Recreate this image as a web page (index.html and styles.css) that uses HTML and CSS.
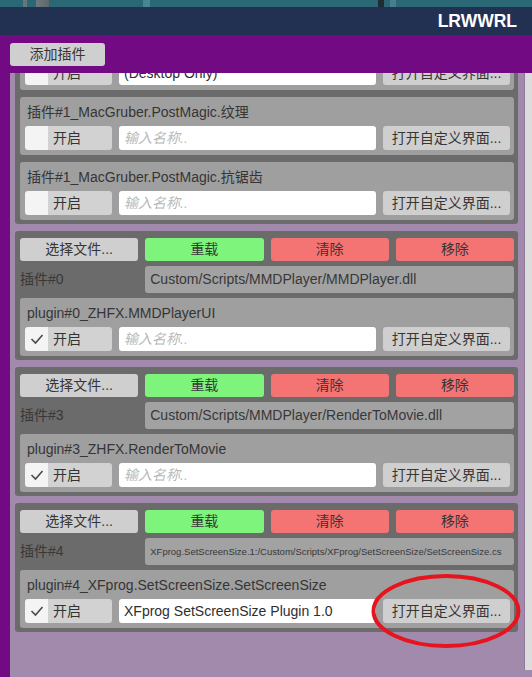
FILE: index.html
```html
<!DOCTYPE html>
<html lang="zh">
<head>
<meta charset="utf-8">
<title>LRWWRL</title>
<link rel="stylesheet" href="styles.css">
</head>
<body>
<div class="scene"></div>
<header class="titlebar"><span class="brand">LRWWRL</span></header>
<div class="toolbar"><button class="btn add-btn">添加插件</button></div>
<div class="body-area">
  <div class="edge"></div>
  <div class="viewport">
    <div class="content">
      <section class="panel panel-stack">
        <div class="card">
          <div class="card-title">插件#1_MacGruber.PostMagic.Desktop</div>
          <div class="controls">
            <div class="toggle"><span class="check"></span><span class="toggle-label">开启</span></div>
            <div class="input filled">(Desktop Only)</div>
            <button class="btn open-btn">打开自定义界面...</button>
          </div>
        </div>
        <div class="card">
          <div class="card-title">插件#1_MacGruber.PostMagic.纹理</div>
          <div class="controls">
            <div class="toggle"><span class="check"></span><span class="toggle-label">开启</span></div>
            <div class="input placeholder">输入名称..</div>
            <button class="btn open-btn">打开自定义界面...</button>
          </div>
        </div>
        <div class="card">
          <div class="card-title">插件#1_MacGruber.PostMagic.抗锯齿</div>
          <div class="controls">
            <div class="toggle"><span class="check"></span><span class="toggle-label">开启</span></div>
            <div class="input placeholder">输入名称..</div>
            <button class="btn open-btn">打开自定义界面...</button>
          </div>
        </div>
      </section>

      <section class="panel panel-grid">
        <button class="btn">选择文件...</button>
        <button class="btn btn-green">重载</button>
        <button class="btn btn-red">清除</button>
        <button class="btn btn-red">移除</button>
        <div class="plugin-label">插件#0</div>
        <div class="path-field">Custom/Scripts/MMDPlayer/MMDPlayer.dll</div>
        <div class="card card-wide">
          <div class="card-title">plugin#0_ZHFX.MMDPlayerUI</div>
          <div class="controls">
            <div class="toggle"><span class="check"><svg class="tick" viewBox="0 0 14 12" width="14" height="12"><polyline points="1.5,6 5.5,10 12.5,2"/></svg></span><span class="toggle-label">开启</span></div>
            <div class="input placeholder">输入名称..</div>
            <button class="btn open-btn">打开自定义界面...</button>
          </div>
        </div>
      </section>

      <section class="panel panel-grid">
        <button class="btn">选择文件...</button>
        <button class="btn btn-green">重载</button>
        <button class="btn btn-red">清除</button>
        <button class="btn btn-red">移除</button>
        <div class="plugin-label">插件#3</div>
        <div class="path-field">Custom/Scripts/MMDPlayer/RenderToMovie.dll</div>
        <div class="card card-wide">
          <div class="card-title">plugin#3_ZHFX.RenderToMovie</div>
          <div class="controls">
            <div class="toggle"><span class="check"><svg class="tick" viewBox="0 0 14 12" width="14" height="12"><polyline points="1.5,6 5.5,10 12.5,2"/></svg></span><span class="toggle-label">开启</span></div>
            <div class="input placeholder">输入名称..</div>
            <button class="btn open-btn">打开自定义界面...</button>
          </div>
        </div>
      </section>

      <section class="panel panel-grid">
        <button class="btn">选择文件...</button>
        <button class="btn btn-green">重载</button>
        <button class="btn btn-red">清除</button>
        <button class="btn btn-red">移除</button>
        <div class="plugin-label">插件#4</div>
        <div class="path-field small">XFprog.SetScreenSize.1:/Custom/Scripts/XFprog/SetScreenSize/SetScreenSize.cs</div>
        <div class="card card-wide">
          <div class="card-title">plugin#4_XFprog.SetScreenSize.SetScreenSize</div>
          <div class="controls">
            <div class="toggle"><span class="check"><svg class="tick" viewBox="0 0 14 12" width="14" height="12"><polyline points="1.5,6 5.5,10 12.5,2"/></svg></span><span class="toggle-label">开启</span></div>
            <div class="input filled">XFprog SetScreenSize Plugin 1.0</div>
            <button class="btn open-btn">打开自定义界面...</button>
          </div>
        </div>
      </section>
    </div>
  </div>
  <div class="scrollbar"></div>
</div>
<svg class="annotation" width="160" height="84" viewBox="0 0 160 84">
  <ellipse cx="80" cy="42" rx="72.5" ry="35" />
</svg>
</body>
</html>
```

FILE: styles.css
```css
html, body {
  margin: 0;
  padding: 0;
}

body {
  width: 532px;
  height: 677px;
  overflow: hidden;
  display: flex;
  flex-direction: column;
  font-family: "Liberation Sans", Arial, "Noto Sans CJK SC", sans-serif;
  font-size: 14px;
  color: #343434;
  background: #a18aab;
  position: relative;
}

.scene {
  height: 7px;
  flex: none;
  background:
    linear-gradient(90deg,
      #2b6876 0, #2b6876 23px,
      #6b7479 23px, #6b7479 27px,
      #2b6876 27px, #2b6876 36px,
      #6f787c 36px, #5d676b 49px,
      #2b6876 49px, #2b6876 143px,
      #4a8591 143px, #4a8591 150px,
      #2b6876 150px, #2b6876 378px,
      #1f2c33 378px, #1f2c33 384px,
      #2b6876 384px, #2b6876 390px,
      #467f8b 390px, #467f8b 396px,
      #2b6876 396px);
}

.titlebar {
  height: 28px;
  flex: none;
  background: #223152;
  display: flex;
  align-items: center;
  justify-content: flex-end;
  padding-right: 15px;
}

.brand {
  color: #ffffff;
  font-weight: bold;
  font-size: 17.5px;
  letter-spacing: 0;
}

.toolbar {
  height: 38px;
  flex: none;
  background: #720a84;
  padding: 8px 10px 0;
  box-sizing: border-box;
  position: relative;
  z-index: 2;
}

.btn {
  font-family: inherit;
  font-size: 14px;
  color: #363636;
  background: #cfcfcf;
  border: none;
  border-radius: 3px;
  padding: 0;
  height: 23px;
  line-height: 23px;
  text-align: center;
  white-space: nowrap;
  overflow: hidden;
}

.add-btn {
  width: 95px;
}

.body-area {
  flex: 1;
  min-height: 0;
  display: flex;
  background: #a18aab;
}

.edge {
  width: 10px;
  flex: none;
  background: #720a84;
}

.viewport {
  flex: 1;
  min-width: 0;
  overflow: hidden;
  padding: 0 6px 0 5px;
}

.content {
  margin-top: -48px;
  display: flex;
  flex-direction: column;
  gap: 7px;
}

.scrollbar {
  width: 7px;
  flex: none;
  background: #dcdcdc;
  margin-bottom: 7px;
  border-left: 1px solid #8f7a99;
}

.panel {
  background: #6b6b6b;
  border-radius: 3px;
  padding: 7px 4px 4px 5px;
}

.panel-stack {
  display: flex;
  flex-direction: column;
  gap: 7px;
}

.panel-grid {
  display: grid;
  grid-template-columns: repeat(4, 1fr);
  column-gap: 7px;
  row-gap: 5px;
}

.btn-green {
  background: #7ff47d;
}

.btn-red {
  background: #f47373;
}

.plugin-label {
  height: 27px;
  line-height: 27px;
  color: #383838;
  white-space: nowrap;
}

.path-field {
  grid-column: 2 / 5;
  height: 27px;
  line-height: 27px;
  background: #a2a2a2;
  border-radius: 3px;
  padding-left: 5px;
  color: #383838;
  white-space: nowrap;
  overflow: hidden;
}

.path-field.small {
  font-size: 9.5px;
}

.card {
  background: #9f9f9f;
  border-radius: 3px;
  padding: 4px 4px 5px 5px;
  height: 58px;
  box-sizing: border-box;
}

.card-wide {
  grid-column: 1 / -1;
}

.card-title {
  height: 22px;
  line-height: 22px;
  margin-bottom: 3px;
  padding-left: 2px;
  color: #353535;
  white-space: nowrap;
  overflow: hidden;
}

.controls {
  display: flex;
  gap: 7px;
  height: 24px;
}

.toggle {
  width: 87px;
  flex: none;
  display: flex;
}

.check {
  width: 23px;
  flex: none;
  background: #f4f4f4;
  border-radius: 3px 0 0 3px;
  display: flex;
  align-items: center;
  justify-content: center;
}

.tick {
  fill: none;
  stroke: #4a4a4a;
  stroke-width: 1.6;
}

.toggle-label {
  flex: 1;
  background: #d2d2d2;
  border-radius: 0 3px 3px 0;
  line-height: 24px;
  padding-left: 5px;
  color: #333333;
}

.input {
  flex: 1;
  min-width: 0;
  background: #ffffff;
  border-radius: 3px;
  padding-left: 5px;
  line-height: 24px;
  white-space: nowrap;
  overflow: hidden;
}

.input.filled {
  color: #2e2e2e;
}

.input.placeholder {
  color: #b9b9b9;
  font-style: italic;
}

.open-btn {
  width: 127px;
  flex: none;
  height: 24px;
  line-height: 24px;
}

.annotation {
  position: absolute;
  left: 366px;
  top: 569px;
  fill: none;
  stroke: #e5141d;
  stroke-width: 4;
  z-index: 5;
}
```
